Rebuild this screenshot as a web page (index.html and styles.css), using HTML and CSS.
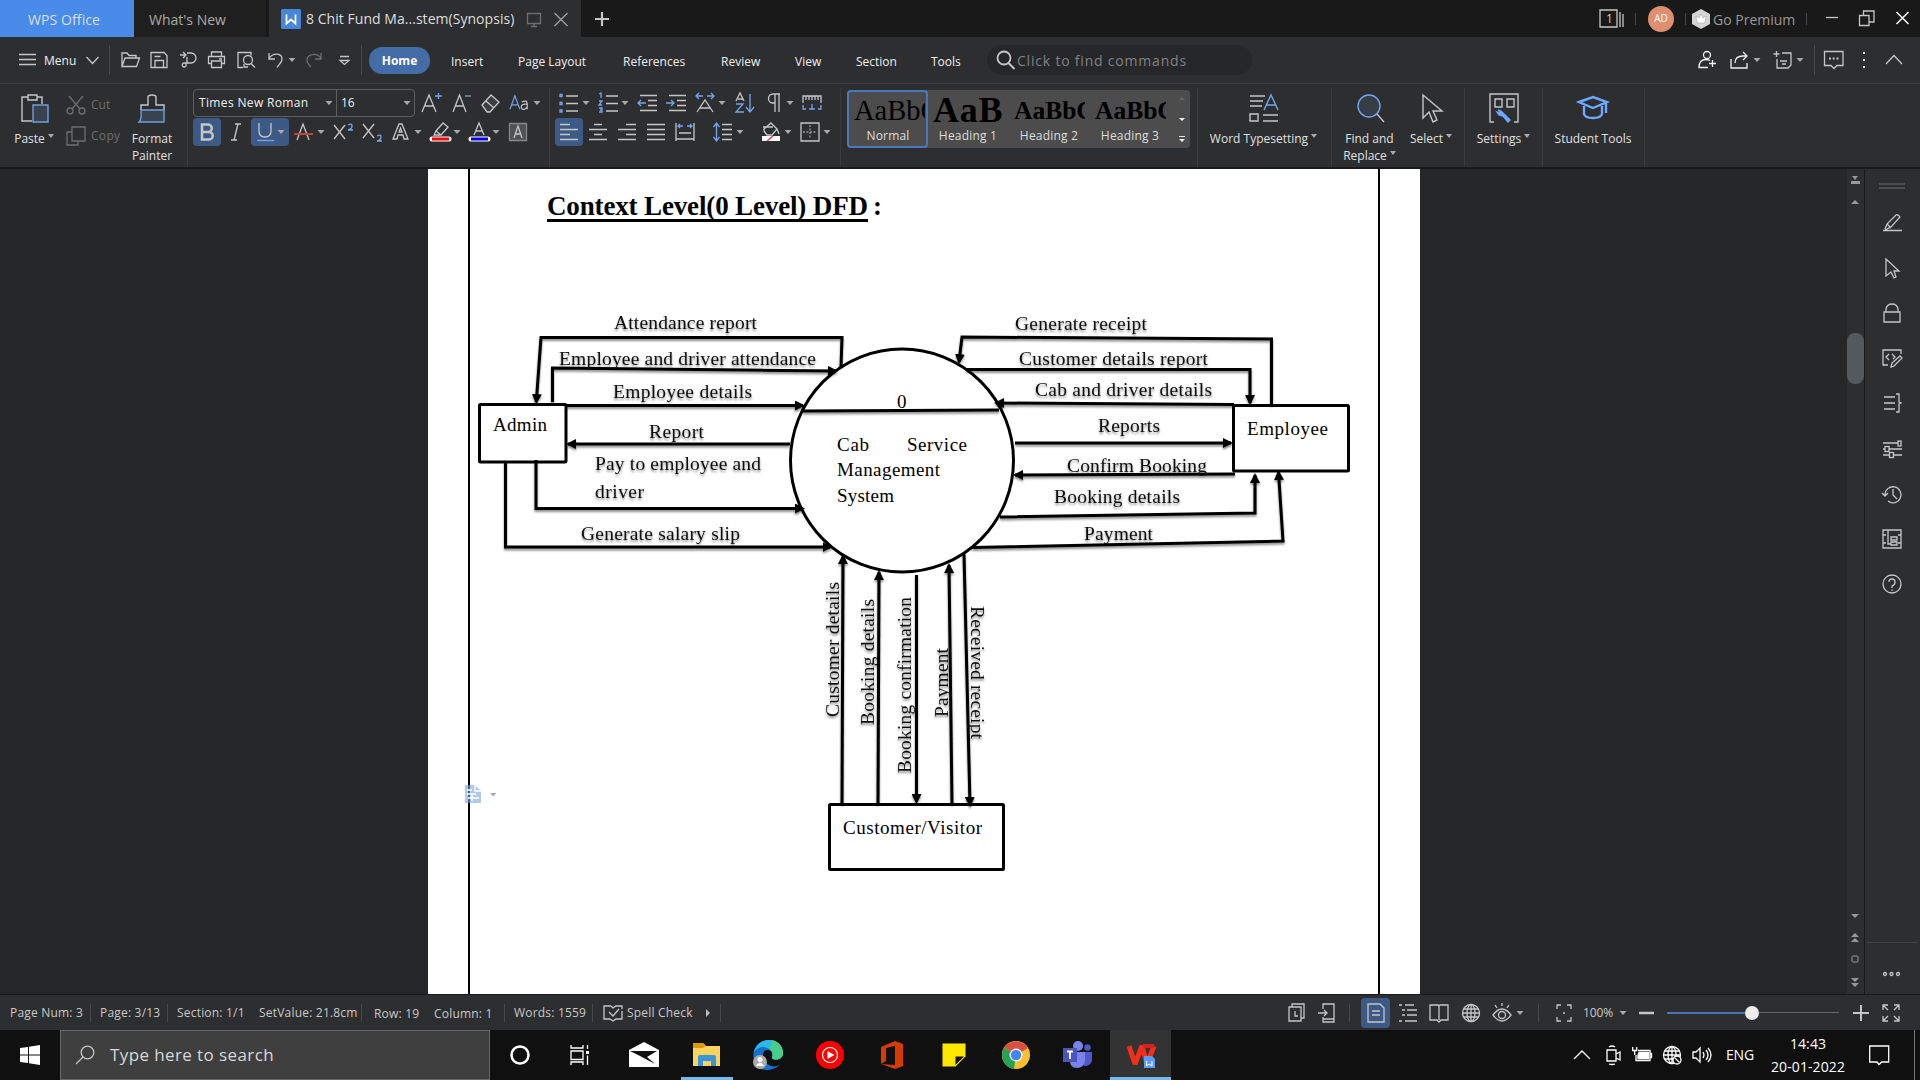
FILE: index.html
```html
<!DOCTYPE html>
<html lang="en">
<head>
<meta charset="utf-8">
<title>WPS Office</title>
<link rel="stylesheet" href="styles.css">
</head>
<body>
<svg class="defs" width="0" height="0">
  <defs>
    <symbol id="car" viewBox="0 0 8 20"><path d="M.5 8h7L4 12z" fill="#aaa" stroke="none"/></symbol>
    <symbol id="globe" viewBox="0 0 20 20"><circle cx="10" cy="10" r="8.500"/><ellipse cx="10" cy="10" rx="4" ry="8.500"/><path d="M10 1.500v17M2.500 6h15M1.500 10h17M2.500 14h15"/></symbol>
    <marker id="head" viewBox="0 0 10 10" refX="8" refY="5" markerWidth="10" markerHeight="10" markerUnits="userSpaceOnUse" orient="auto"><path d="M0 0l10 5-10 5z" fill="#000" stroke="none"/></marker>
    <filter id="shade" filterUnits="userSpaceOnUse" x="428" y="169" width="992" height="826"><feDropShadow dx="0" dy="2" stdDeviation="1.3" flood-color="#000" flood-opacity=".45"/></filter>
  </defs>
</svg>

<header class="titlebar">
  <div class="tab tab-home">WPS Office</div>
  <div class="tab tab-new">What's New</div>
  <div class="tab tab-doc">
    <svg class="doclogo" viewBox="0 0 20 20"><rect width="20" height="20" rx="1.500" fill="#4a86d8" stroke="none"/><path d="M5.500 5.500v9l4.500-4 4.500 4v-9" stroke="#fff" stroke-width="1.700"/></svg>
    <span class="docname">8 Chit Fund Ma...stem(Synopsis)</span>
    <svg class="i dim" viewBox="0 0 20 20"><path d="M3.500 4.500h13v10h-13zM10 14.500v3M7 17.500h6"/></svg>
    <svg class="i soft" viewBox="0 0 20 20"><path d="M3.500 4l13 13M16.500 4l-13 13"/></svg>
  </div>
  <svg class="i plus" viewBox="0 0 20 20"><path d="M10 3v14M3 10h14" stroke-width="2.200"/></svg>
  <svg class="i wide" viewBox="0 0 28 20"><path d="M2 1h17v17H2zM22 3v15M25 5v13" /><text x="8" y="14" class="tiny">1</text></svg>
  <i class="v"></i>
  <span class="avatar">AD</span>
  <i class="v"></i>
  <svg class="i" viewBox="0 0 20 20"><path d="M10 0l9 5v10l-9 5-9-5V5z" fill="#d5d5d5" stroke="none"/><path d="M5 7l3 2 2-4 2 4 3-2-1 7H6z" fill="#fff" stroke="#999" stroke-width=".5"/></svg>
  <span class="premium">Go Premium</span>
  <i class="v"></i>
  <svg class="i" viewBox="0 0 20 20"><path d="M3 8.500h12"/></svg>
  <svg class="i" viewBox="0 0 20 20"><path d="M2.500 6.500h9.500v10H2.500zM6.500 6V2h10.500v11h-4.500"/></svg>
  <svg class="i white" viewBox="0 0 20 20"><path d="M4.500 3l12 12M16.500 3l-12 12" stroke-width="1.600"/></svg>
</header>

<nav class="menubar">
  <svg class="i" viewBox="0 0 20 20"><path d="M0 4.500h17M0 9.500h17M0 14.500h17"/></svg>
  <span class="mn">Menu</span>
  <svg class="i" viewBox="0 0 20 20"><path d="M1.500 7l6 6.500 6-6.500"/></svg>
  <i class="v"></i>
  <svg class="i" viewBox="0 0 20 20"><path d="M2 16.500V3h5l2 2.500h7V8M2 16.500l3-8.500h14.500l-3 8.500z"/></svg>
  <svg class="i" viewBox="0 0 20 20"><path d="M2 2.500h13l3 3v12H2zM6 17v-6.500h8.500V17M5.500 6.500h6"/></svg>
  <svg class="i" viewBox="0 0 20 20"><path d="M1 5h5M4 2l3 3-3 3M8 3h4a5 5 0 0 1 0 10H7v3a2 2 0 1 1-2-3h3V7"/></svg>
  <svg class="i" viewBox="0 0 20 20"><path d="M3.500 6.500V2h10v4.500M3 13.500H.5v-7h16v7H14M3.500 11h10v6.500h-10zM11 9h3"/></svg>
  <svg class="i" viewBox="0 0 20 20"><path d="M7 17.500H2v-15h13v3"/><circle cx="12" cy="10" r="4.500"/><path d="M15 13.500l4 4M8 14v3h4"/></svg>
  <svg class="i" viewBox="0 0 20 20"><path d="M2 3v6h6M2 8.500C6 2 15 3 15 9c0 4-3 5-5 8.500"/></svg>
  <svg class="c"><use href="#car"/></svg>
  <svg class="i dim" viewBox="0 0 20 20"><path d="M16 3v6h-6M16 8.500C12 2 2 4 2 10c0 3 2 5 4 7"/></svg>
  <svg class="i" viewBox="0 0 20 20"><path d="M2 6.500h9M2 10.500h9l-4.500 4z"/></svg>
  <i class="v"></i>
  <span class="home">Home</span>
  <span>Insert</span><span>Page Layout</span><span>References</span><span>Review</span><span>View</span><span>Section</span><span>Tools</span>
  <div class="find"><svg class="i" viewBox="0 0 20 20"><circle cx="8" cy="8" r="6.500" stroke-width="1.800"/><path d="M12.500 13l6 6" stroke-width="2"/></svg><span>Click to find commands</span></div>
  <svg class="i white" viewBox="0 0 20 20"><circle cx="10" cy="5" r="3.500"/><path d="M11 17.500H2c0-6 3-8 7-8 2 0 3 .5 4 1M15.500 10v7M12 13.500h7"/></svg>
  <svg class="i white" viewBox="0 0 20 20"><path d="M2 9v9h16v-5M6 13c0-5 3-7 8-7h3M14 2l4 4-4 4"/></svg>
  <svg class="c"><use href="#car"/></svg>
  <svg class="i" viewBox="0 0 20 20"><path d="M3.500 1v6M.5 4h6M9 3h9v12l-3 3H4V9M7 11h7M9 14h4"/></svg>
  <svg class="c"><use href="#car"/></svg>
  <i class="v"></i>
  <svg class="i" viewBox="0 0 20 20"><path d="M1.500 1.500H20v14h-6l-3 3-3-3H1.500z"/><path d="M6 8.500h2M9.700 8.500h2M13.500 8.500h2" stroke-width="2"/></svg>
  <svg class="c" viewBox="0 0 8 20"><path d="M2 3h2M2 10h2M2 17h2" stroke="#ddd" stroke-width="2"/></svg>
  <svg class="i" viewBox="0 0 20 20"><path d="M2 14l8-8.500 8 8.500"/></svg>
</nav>

<section class="ribbon">
  <div class="group clip">
    <div class="big"><svg class="b" viewBox="0 0 30 30"><path d="M9 4H3v24h10M18 4h5v7M9 2h9v5H9z"/><path d="M14 12h15v17H14z" stroke="#6f9fe0" fill="#39424f"/></svg><span>Paste<b></b></span></div>
    <div class="stack">
      <div class="dim"><svg class="i" viewBox="0 0 20 20"><path d="M3 1l11 13M17 1L6 14"/><circle cx="4" cy="16" r="3"/><circle cx="16" cy="16" r="3"/></svg>Cut</div>
      <div class="dim"><svg class="i" viewBox="0 0 20 20"><path d="M6 1h13v14H6zM6 6H1v13h11v-4"/></svg>Copy</div>
    </div>
    <div class="big fp"><svg class="b" viewBox="0 0 30 30"><path d="M4 17v-5h7V4q0-2 4-2t4 2v8h8v5"/><path d="M4 17h23v12H2q3-3 2-12z" stroke="#6f9fe0" fill="#39424f"/></svg><span>Format<br>Painter</span></div>
  </div>

  <div class="group font">
    <div class="row f1">
      <div class="combo"><span class="fam">Times New Roman</span><svg class="c"><use href="#car"/></svg><span class="size">16</span><svg class="c"><use href="#car"/></svg></div>
      <svg class="i" viewBox="0 0 20 20"><path d="M1 19L8 2l7 17M4 13h8"/><path d="M14 3h7M17.500 0v6" class="bl"/></svg>
      <svg class="i" viewBox="0 0 20 20"><path d="M1 19L7.500 2 14 19M4 13h7"/><path d="M13 3h6" class="bl"/></svg>
      <svg class="i" viewBox="0 0 20 20"><path d="M2 12L11 2l8 7-9 10H7zM6 8l8 7" fill="#3c3d3f"/></svg>
      <svg class="i" viewBox="0 0 22 20"><path d="M1 17L6.500 2 12 17M3 12h7" class="bl"/><path d="M14 9q6-3 6 2v6M20 11c-9 0-7 6-4 6q3 0 4-3"/></svg>
      <svg class="c"><use href="#car"/></svg>
    </div>
    <div class="row f2">
      <span class="on"><svg class="i" viewBox="0 0 20 20"><path d="M5 2.500h6a3.500 3.500 0 0 1 0 7.500H5zM5 10h7a3.700 3.700 0 0 1 0 7.500H5z" stroke-width="2.500"/></svg></span>
      <svg class="i" viewBox="0 0 20 20"><path d="M9 2h6M12 2L8 18M5 18h6"/></svg>
      <span class="on duo"><svg class="i" viewBox="0 0 20 20"><path d="M4 1v8q0 6 6 6t6-6V1"/><path d="M2 18.500h17" class="bl"/></svg><svg class="c"><use href="#car"/></svg></span>
      <svg class="i" viewBox="0 0 20 20"><path d="M4 18l6-16 6 16M7 12h6"/><path d="M1 12h19" stroke="#c0463c" stroke-width="2"/></svg>
      <svg class="c"><use href="#car"/></svg>
      <svg class="i" viewBox="0 0 20 20"><path d="M1 3l11 14M12 3L1 17"/><path d="M15 3q4-2 4 1t-4 4h5" class="bl"/></svg>
      <svg class="i" viewBox="0 0 20 20"><path d="M1 2l11 14M12 2L1 16"/><path d="M15 14q4-2 4 1t-4 4h5" class="bl"/></svg>
      <svg class="i" viewBox="0 0 20 20"><path d="M2 17L8 2h3l6 15h-4l-1-4H7l-1 4zM8 10h3L9.500 6z"/></svg>
      <svg class="c"><use href="#car"/></svg>
      <svg class="i" viewBox="0 0 20 20"><path d="M6 9l7-8 5 4-7 8zM6 9l-2 4h7"/><path d="M2 17h17" stroke="#fff" stroke-width="5" stroke-linecap="round"/><path d="M2 17h17" stroke="#f00" stroke-width="3"/></svg>
      <svg class="c"><use href="#car"/></svg>
      <svg class="i" viewBox="0 0 20 20"><path d="M5 13l5-12 5 12M7 9h6"/><path d="M2 17h17" stroke="#fff" stroke-width="5" stroke-linecap="round"/><path d="M2 17h17" stroke="#00f" stroke-width="3"/></svg>
      <svg class="c"><use href="#car"/></svg>
      <svg class="i" viewBox="0 0 20 20"><path d="M1.500 1.500h17v17h-17z" stroke="#888" fill="#505153"/><path d="M6 16l4-12 4 12M7 12h6"/></svg>
    </div>
  </div>

  <div class="group para">
    <div class="row p1">
      <svg class="i" viewBox="0 0 20 20"><path d="M8 3h12M8 10.500h12M8 18h12"/><path d="M2 1.500h2v2H2zM2 9.500h2v2H2zM2 17h2v2H2z" class="bl"/></svg>
      <svg class="c"><use href="#car"/></svg>
      <svg class="i" viewBox="0 0 20 20"><path d="M8 3h12M8 10.500h12M8 18h12"/><path d="M1 1l2-1v5M1 8h3L1 12h3M1 15h3v4H1M2 17h2" class="bl"/></svg>
      <svg class="c"><use href="#car"/></svg>
      <svg class="i" viewBox="0 0 20 20"><path d="M3 2.500h17M11 7.500h9M11 12.500h9M3 17.500h17"/><path d="M9 10H1M4 7l-3 3 3 3" class="bl"/></svg>
      <svg class="i" viewBox="0 0 20 20"><path d="M3 2.500h17M11 7.500h9M11 12.500h9M3 17.500h17"/><path d="M0 10h8M5 7l3 3-3 3" class="bl"/></svg>
      <svg class="i" viewBox="0 0 20 20"><path d="M2 19l8-12 8 12M5 15h10"/><path d="M8 3H1M4 0L1 3l3 3M12 3h7M16 0l3 3-3 3" class="bl"/></svg>
      <svg class="c"><use href="#car"/></svg>
      <svg class="i" viewBox="0 0 20 20"><path d="M1 8l4-8 4 8M3 6h5"/><path d="M1 11h7l-7 8h8M15 1v18M11 14l4 5 4-5" class="bl"/></svg>
      <svg class="i" viewBox="0 0 20 20"><path d="M15 1H8a4 4 0 0 0 0 9h2M10 1v18M14 1v18"/></svg>
      <svg class="c"><use href="#car"/></svg>
      <svg class="i" viewBox="0 0 20 20"><path d="M1 10V3h18v7M4 3v4M7 3v4M10 3v4M13 3v4M16 3v4"/><path d="M1 12v4h3M19 12v4h-3M10 11v5M7 16h6" class="bl"/></svg>
    </div>
    <div class="row p2">
      <span class="on"><svg class="i" viewBox="0 0 20 20"><path d="M1 2.500h10M1 7.500h18M1 12.500h10M1 17.500h18"/></svg></span>
      <svg class="i" viewBox="0 0 20 20"><path d="M6 2.500h8M1 7.500h18M6 12.500h8M1 17.500h18"/></svg>
      <svg class="i" viewBox="0 0 20 20"><path d="M9 2.500h10M1 7.500h18M9 12.500h10M1 17.500h18"/></svg>
      <svg class="i" viewBox="0 0 20 20"><path d="M1 2.500h18M1 7.500h18M1 12.500h18M1 17.500h18"/></svg>
      <svg class="i" viewBox="0 0 20 20"><path d="M1 1v18M19 1v18M4 11h12M1 17h18"/><path d="M3 4h5M5 2L3 4l2 2M12 4h5M15 2l2 2-2 2" class="bl"/></svg>
      <svg class="i" viewBox="0 0 20 20"><path d="M9 2.500h10M9 7.500h10M9 12.500h10M9 17.500h10"/><path d="M3.500 1v18M.5 5l3-4 3 4M.5 15l3 4 3-4" class="bl"/></svg>
      <svg class="c"><use href="#car"/></svg>
      <svg class="i" viewBox="0 0 20 20"><path d="M3 7l7-6 6 6-5 6H6L3 9zM2 5h10M16 7l2 5"/><path d="M1 14h18v5H1z" fill="#fff" stroke="none"/><path d="M6 19l6-5" stroke="#d33"/></svg>
      <svg class="c"><use href="#car"/></svg>
      <svg class="i" viewBox="0 0 20 20"><path d="M1 1h18v18H1z"/><path d="M10 3v14M3 10h14" stroke-dasharray="2 1.500" stroke="#999"/></svg>
      <svg class="c"><use href="#car"/></svg>
    </div>
  </div>

  <div class="group styles">
    <div class="gallery">
      <div class="style sel"><em>AaBbC</em><span>Normal</span></div>
      <div class="style h1"><em>AaBb</em><span>Heading 1</span></div>
      <div class="style h2"><em>AaBbC</em><span>Heading 2</span></div>
      <div class="style h2"><em>AaBbC</em><span>Heading 3</span></div>
      <div class="more"><svg viewBox="0 0 12 58"><path d="M4 10l3-3 3 3z" fill="#666"/><path d="M4 28h6l-3 3zM4 49h6l-3 3z" fill="#eee"/><path d="M4 46.500h6" stroke="#eee"/></svg></div>
    </div>
  </div>

  <div class="group g-type"><div class="big"><svg class="b" viewBox="0 0 30 30"><path d="M1 3h15M1 8h13M1 13h12M1 21h8v7H1zM14 22h15M14 28h15"/><path d="M15 17l7-15 7 15M17 12h9" class="bl"/></svg><span>Word Typesetting<b></b></span></div></div>
  <div class="group g-find">
    <div class="big"><svg class="b" viewBox="0 0 30 30"><circle cx="14" cy="13" r="11" class="bl" fill="#363d47"/><path d="M22 21l7 8"/></svg><span>Find and<br>Replace<b></b></span></div>
    <div class="big"><svg class="b" viewBox="0 0 30 30"><path d="M7 2v23l6-6 4 10 4-2-4-9h9z"/></svg><span>Select<b></b></span></div>
  </div>
  <div class="group g-set"><div class="big"><svg class="b" viewBox="0 0 30 30"><path d="M5 29H1V1h28v28h-4M6 6h7v8H6zM18 6h7v8h-7z"/><path d="M9 17l3 1 3 3 6 6-2 2-5-6-4-1-2-3 3 1 1-1z" fill="#6fa8ff" stroke="#6fa8ff"/></svg><span>Settings<b></b></span></div></div>
  <div class="group g-stu"><div class="big"><svg class="b" viewBox="0 0 30 30"><path d="M1 9l14-5 14 5-14 6zM6 13v8q1 4 9 4t9-4v-8M28 10v10" stroke="#6fa8ff" stroke-width="2.400"/></svg><span>Student Tools</span></div></div>
</section>

<main class="work">
  <div class="canvas">
    <svg class="page" viewBox="428 169 992 826">
      <path d="M469 169v826M1379 169v826" stroke="#000" stroke-width="2"/>
      <g class="heading"><text x="547" y="215" textLength="321">Context Level(0 Level) DFD</text><text x="873" y="215">:</text></g>
      <path d="M547 220.500h321" stroke="#000" stroke-width="3"/>
      <g class="flow" filter="url(#shade)">
        <g class="wires">
          <path d="M841 367l1-29.500H541L536.300 402"/><path d="M552.500 402v-34L836 371"/><path d="M566 405.500h237"/><path d="M790 444H568"/>
          <path d="M536 460v48.500h267"/><path d="M505.500 461v86h325"/>
          <path d="M1271.500 405V339L962 337l-3 25"/><path d="M966 369.500h284V403"/><path d="M1234 404.500L996 403"/><path d="M1015 443h216"/>
          <path d="M1235 474l-220 1"/><path d="M1000 517l255-4v-38"/><path d="M972 547.500l311-6.500-4.500-69"/>
          <path d="M842 804l1-248"/><path d="M878 804l1-232"/><path d="M916.500 575v227"/><path d="M952 804l-3-239"/><path d="M964 554l6 251"/>
        </g>
        <path d="M803 411l196-1" stroke="#000" stroke-width="3"/>
        <g class="labels">
          <text x="614" y="329" textLength="143">Attendance report</text>
          <text x="559" y="364.500" textLength="257">Employee and driver attendance</text>
          <text x="613" y="398" textLength="139">Employee details</text>
          <text x="649" y="437.500" textLength="55">Report</text>
          <text x="595" y="469.500" textLength="166">Pay to employee and</text>
          <text x="595" y="498" textLength="49">driver</text>
          <text x="581" y="540" textLength="159">Generate salary slip</text>
          <text x="1015" y="330" textLength="132">Generate receipt</text>
          <text x="1019" y="365" textLength="189">Customer details report</text>
          <text x="1035" y="396" textLength="177">Cab and driver details</text>
          <text x="1098" y="431.500" textLength="62">Reports</text>
          <text x="1067" y="472" textLength="140">Confirm Booking</text>
          <text x="1054" y="503" textLength="126">Booking details</text>
          <text x="1084" y="540" textLength="69">Payment</text>
          <text transform="translate(838.500 717) rotate(-90)" textLength="135">Customer details</text>
          <text transform="translate(873.500 725) rotate(-90)" textLength="126">Booking details</text>
          <text transform="translate(911 773) rotate(-90)" textLength="176">Booking confirmation</text>
          <text transform="translate(948 717) rotate(-90)" textLength="69">Payment</text>
          <text transform="translate(971 606) rotate(90)" textLength="133">Received receipt</text>
        </g>
      </g>
      <g fill="none" stroke="#000" stroke-width="3">
        <circle cx="902" cy="460.500" r="111.500"/>
        <rect x="479.500" y="404.500" width="86.500" height="57.500" rx="1"/>
        <rect x="1233.500" y="405.500" width="115" height="65.500" rx="1"/>
        <rect x="829.500" y="804.500" width="174" height="65" rx="1"/>
      </g>
      <g class="names">
        <text x="493" y="431" textLength="54">Admin</text>
        <text x="1247" y="435" textLength="81">Employee</text>
        <text x="843" y="834" textLength="139">Customer/Visitor</text>
        <text x="897" y="407.500">0</text>
        <text x="837" y="450.500" textLength="32">Cab</text><text x="907" y="450.500" textLength="60">Service</text>
        <text x="837" y="475.500" textLength="103">Management</text>
        <text x="837" y="501.500" textLength="57">System</text>
      </g>
      <path d="M465 785h10l6 6v12h-16z" fill="#7fa6dc" opacity=".6"/><path d="M475 785v6h6M467 790h5M467 794h9M468 798h11M472 795v6" stroke="#fff" fill="none" stroke-width="1.300"/>
      <path d="M490 793h6.500l-3.200 3.500z" fill="#aaa"/>
    </svg>
  </div>
  <div class="scroll">
    <svg class="ends" viewBox="0 0 17 40"><path d="M5 7h6l-3 4zM4 12h9v3H4z" fill="#999"/><path d="M4 35l4-4 4 4z" fill="#999"/></svg>
    <div class="thumb"></div>
    <svg class="tail" viewBox="0 0 17 84"><path d="M4 3h8l-4 4zM4 26l4-4 4 4zM4 31l4-4 4 4zM4 67h8l-4 4zM4 72h8l-4 4z" fill="#999"/><rect x="5" y="45" width="6" height="6" rx="1" fill="none" stroke="#999"/></svg>
  </div>
  <aside class="side">
    <svg class="grip" viewBox="0 0 26 8"><path d="M0 2h26M0 6h26"/></svg>
    <svg class="i" viewBox="0 0 20 20"><path d="M1 17.500h19M3 16l2-5 9-9q2-1 4 2l-9 10-6 3M5 11l4 4"/></svg>
    <svg class="i" viewBox="0 0 20 20"><path d="M4 1v17l5-4 3 6 2-1-2-6h5z"/></svg>
    <svg class="i" viewBox="0 0 20 20"><path d="M2 9h16v10H2zM4 9V6q1-5 6-5t6 5v3"/></svg>
    <svg class="i" viewBox="0 0 20 20"><path d="M6 17H1V2h18v4M7 6L4 9l3 3M10 6l3 3-2 2M9 19l1-4 8-7 2 2-8 8z"/></svg>
    <svg class="i" viewBox="0 0 20 20"><path d="M2 4h11M2 10h11M2 16h11M14 1h3v8l2 1-2 1v8h-3"/></svg>
    <svg class="i" viewBox="0 0 20 20"><path d="M1 4h15M1 10h2M7 10h13M1 16h6M11 16h9"/><rect x="16" y="2" width="3" height="5"/><rect x="3" y="7.500" width="4" height="5"/><rect x="7.500" y="13.500" width="4" height="5"/></svg>
    <svg class="i" viewBox="0 0 20 20"><path d="M3 11a8 8 0 1 1 3 6M0 9l3 3 3-3M11 5v6l4 4"/></svg>
    <svg class="i" viewBox="0 0 20 20"><path d="M1 1h18v18H1zM6 1v14h3M9 8h6v3H9zM9 13h6v3H9zM1 6h3M1 14h3M16 6h3M16 14h3"/></svg>
    <svg class="i" viewBox="0 0 20 20"><circle cx="10" cy="10" r="9"/><path d="M7 8q0-3 3-3t3 3-3 4v2M10 15.500v1.500"/></svg>
    <div class="dots"><svg class="i" viewBox="0 0 20 20"><circle cx="3" cy="10" r="1.500"/><circle cx="9.500" cy="10" r="1.500"/><circle cx="16" cy="10" r="1.500"/></svg></div>
  </aside>
</main>

<footer class="status">
  <span>Page Num: 3</span><i class="v"></i><span>Page: 3/13</span><i class="v"></i><span>Section: 1/1</span><span>SetValue: 21.8cm</span><i class="v"></i><span class="lo">Row: 19</span><span class="lo">Column: 1</span><i class="v"></i><span>Words: 1559</span><i class="v"></i>
  <svg class="i" viewBox="0 0 20 20"><path d="M8 3H1v13h6l3 2 3-2h6V8M8 3l2 2 3-2h6v3M6 9l4 4 6-7"/></svg><span>Spell Check</span>
  <svg class="c" viewBox="0 0 8 20"><path d="M2 6l4 4-4 4z" fill="#bbb"/></svg><i class="v"></i>
  <svg class="i" viewBox="0 0 20 20"><path d="M2 4h12v14H2zM5 4V1h12v14h-3M8 8v5h3"/></svg>
  <svg class="i" viewBox="0 0 20 20"><path d="M5 6V1h11v18H5v-5M0 10h9M6 7l3 3-3 3M5 16h11"/></svg>
  <i class="v"></i>
  <span class="view"><svg class="i" viewBox="0 0 20 20"><path d="M2 1h12l4 4v14H2zM6 8h8M6 12h8"/></svg></span>
  <svg class="i" viewBox="0 0 20 20"><path d="M1 2h3M7 2h9M4 7h3M9 7h10M4 12h3M9 12h10M1 18h3M7 18h12"/></svg>
  <svg class="i" viewBox="0 0 20 20"><path d="M1 2h8l1 1 1-1h8v15h-7l-2 2-2-2H1zM10 3v14"/></svg>
  <svg class="i"><use href="#globe"/></svg>
  <svg class="i" viewBox="0 0 20 20"><path d="M1 12q9-12 18 0-9 12-18 0zM10 0v3M3 2l2 3M17 2l-2 3"/><circle cx="10" cy="12" r="3.500"/></svg>
  <svg class="c"><use href="#car"/></svg><i class="v"></i>
  <svg class="i" viewBox="0 0 20 20"><path d="M6 2H2v4M12 2h4v4M6 18H2v-4M12 18h4v-4M8 10h2"/></svg>
  <span class="pct">100%</span><svg class="c"><use href="#car"/></svg>
  <svg class="i" viewBox="0 0 20 20"><path d="M2 10h15" stroke-width="2.500"/></svg>
  <div class="slider"><div class="fill"></div><div class="knob"></div></div>
  <svg class="i" viewBox="0 0 20 20"><path d="M2 10h16M10 2v16" stroke-width="2"/></svg>
  <svg class="i" viewBox="0 0 20 20"><path d="M2 7V2h5M2 2l5 5M13 2h5v5M18 2l-5 5M2 13v5h5M2 18l5-5M13 18h5v-5M18 18l-5-5"/></svg>
</footer>

<div class="taskbar">
  <svg class="start" viewBox="0 0 20 20"><path d="M0 3l8-1v7.500H0zM9 1.800L20 0v9.500H9zM0 10.500h8V18l-8-1zM9 10.500h11V20L9 18.200z" fill="#fff"/></svg>
  <div class="search"><svg class="i" viewBox="0 0 20 20"><circle cx="12.500" cy="7.500" r="6.300"/><path d="M8 12l-7 7"/></svg><span>Type here to search</span></div>
  <svg class="app" viewBox="0 0 30 30"><circle cx="15" cy="15" r="8.500" fill="none" stroke="#fff" stroke-width="2.500"/></svg>
  <svg class="app" viewBox="0 0 30 30"><path d="M6 5v3h12V5M6 11h12v8.500H6zM6 25v-3h12v3M22.500 5v4M22.500 15.500v9.500" fill="none" stroke="#fff" stroke-width="1.300"/><path d="M21 11h3v3h-3z" fill="#fff"/></svg>
  <svg class="app" viewBox="0 0 30 30"><path d="M0 10l15-8 15 8v17H0z" fill="#fff"/><path d="M1 11h27l-10 6 8 7-15-8z" fill="#101010"/></svg>
  <span class="cell open"><svg class="app" viewBox="0 0 30 30"><path d="M1 3h10l3 3h14v20H1z" fill="#ffd35c"/><path d="M1 3h10l3 3-3 2H1z" fill="#dc9a08"/><path d="M6 26V17q0-2 2-2h14q2 0 2 2v9h-5v-5h-8v5z" fill="#3a94dc"/></svg></span>
  <svg class="app" viewBox="0 0 30 30"><path d="M3 26C-4 10 4 0 16 0c9 0 14 7 14 13 0 7-9 8-11 5 2-5-1-8-5-8-6 0-6 12 4 16 4 1 7 0 9-2-4 6-16 9-24 2z" fill="#1571c8"/><path d="M1 12C4 3 10 0 16 0c9 0 14 7 14 13 0 7-9 8-11 5 2-6-3-11-9-11-4 0-7 2-9 5z" fill="#2bb8e6"/><path d="M18 0c8 1 12 7 12 13 0 7-9 8-11 5 2-5 0-9-4-11 4-1 5-4 3-7z" fill="#47cf88"/><circle cx="7" cy="22" r="7" fill="#aaa"/><circle cx="7" cy="19.500" r="2.500" fill="#fff"/><path d="M3 26q4-7 8 0z" fill="#fff"/></svg>
  <svg class="app" viewBox="0 0 30 30"><circle cx="15" cy="15" r="14" fill="#f00"/><circle cx="15" cy="15" r="7.500" fill="none" stroke="#fff" stroke-width="1.200"/><path d="M12.500 11l7 4-7 4z" fill="#fff"/></svg>
  <svg class="app" viewBox="0 0 30 30"><path d="M4 7l14-6 8 3v22l-8 3-14-5 14 1V6L9 8v13l-5 3z" fill="#d83b01"/></svg>
  <svg class="app" viewBox="0 0 30 30"><path d="M3.500 3.500h23V15H15v11.500H3.500z" fill="#ffe600"/><path d="M16.500 16.500h9l-9 9z" fill="#111"/><path d="M26.500 15v1.500l-10 10H15V15z" fill="#ffe600"/><path d="M16.500 16.500h8.500L16.500 25z" fill="#111"/></svg>
  <svg class="app" viewBox="0 0 30 30"><circle cx="15" cy="15" r="14" fill="#fbc02d"/><path d="M15 15L3 8a14 14 0 0 1 24 0z" fill="#d94f41"/><path d="M15 15l-2 14A14 14 0 0 1 3 8z" fill="#23a455"/><circle cx="15" cy="15" r="6.500" fill="#fff"/><circle cx="15" cy="15" r="5.200" fill="#4285f4"/></svg>
  <svg class="app" viewBox="0 0 30 30"><circle cx="16" cy="6" r="5" fill="#7b83eb"/><circle cx="25.500" cy="7.500" r="3.200" fill="#5059c9"/><path d="M18 12h12v8q-1 6-8 6z" fill="#5059c9"/><path d="M8 12h15v9q-1 7-8 7t-7-7z" fill="#7b83eb"/><path d="M1 8h14v14H1z" fill="#4b53bc"/><path d="M5 11.500h6M8 11.500v7.500" stroke="#fff" stroke-width="1.800"/></svg>
  <span class="cell open cur"><svg class="app" viewBox="0 0 30 30"><path d="M3 6l6 18 7-18 5 18 7-18" fill="none" stroke="#f0301c" stroke-width="5" stroke-linejoin="bevel"/><path d="M17 6h11" stroke="#d8201c" stroke-width="4"/><path d="M18 16h8l3 3v9H18z" fill="#5b9af5"/><path d="M20.500 21v5l2.500-2 3 2v-5" stroke="#fff" fill="none"/></svg></span>
  <svg class="t" viewBox="0 0 20 20"><path d="M2 14l8-8 8 8"/></svg>
  <svg class="t" viewBox="0 0 20 20"><path d="M5 5h9v11H5zM14 9l4-2v8l-4-2M7 2q3-2 6 0M7 19q3 1 6 0"/></svg>
  <svg class="t" viewBox="0 0 20 20"><path d="M6 5.500h12v10H4V10M18 8.500h1.500v4H18"/><path d="M7 7.500h9.500v6H6V10z" fill="#fff"/><path d="M.7 2v3.500h4V2M2.700 5v5"/></svg>
  <svg class="t" viewBox="0 0 20 20"><use href="#globe"/><circle cx="15" cy="15" r="4" fill="#101010"/><path d="M12.500 12.500l5 5"/></svg>
  <svg class="t" viewBox="0 0 20 20"><path d="M1 7h3l4-4v14l-4-4H1zM11 7q2 3 0 6M14 5q4 5 0 10M16 3q6 7 0 14"/></svg>
  <span class="eng">ENG</span>
  <div class="clock"><span>14:43</span><span>20-01-2022</span></div>
  <svg class="t" viewBox="0 0 20 20"><path d="M.7 1h19v16h-7L10 19.500 8 17H.7z"/></svg>
  <i class="edge"></i>
</div>
</body>
</html>
```
FILE: styles.css
```css
* { box-sizing: border-box; }
body {
  margin: 0; width: 1920px; height: 1080px; overflow: hidden;
  display: grid; grid-template-rows: 37px 47px 85px 826px 35px 50px;
  background: #2d2e30; color: #dedede;
  font: 12px/18px "Open Sans", "Noto Sans", sans-serif;
}
span, div { white-space: nowrap; }
.defs { position: absolute; }
svg { display: block; overflow: visible; }
.i { width: 20px; height: 20px; fill: none; stroke: currentColor; stroke-width: 1.3; color: #c6c6c6; flex: none; }
.c { width: 8px; height: 20px; flex: none; }
.bl { stroke: #74a5ee; }
.dim, .dim .i { color: #6d6e70; }
.soft { color: #a0a0a0; }
.white { color: #f0f0f0; }
.v { width: 1px; height: 30px; background: #47484a; }

/* Title bar */
.titlebar {
  display: grid; align-items: center; background: #191919;
  grid-template-columns: 134px 135px 323px 1006px 37px 13px 37px 6px 22px 93px 17px 34px 35px 28px;
}
.tab { height: 37px; line-height: 39px; font-size: 14px; }
.tab-home { background: #488be9; padding-left: 28px; letter-spacing: .1px; }
.tab-new { width: 132px; background: #1f1f1f; color: #aaa; padding-left: 15px; }
.tab-doc { width: 312px; background: #2d2e30; display: flex; align-items: center; padding-left: 12px; }
.doclogo { width: 20px; height: 20px; fill: none; margin-right: 5px; }
.docname { width: 218px; letter-spacing: .04px; }
.tab-doc .i + .i { margin-left: 7px; }
.wide { width: 28px; }
.tiny { font-size: 12px; fill: #ccc; stroke: none; }
.titlebar .v { height: 12px; }
.avatar { width: 26px; height: 26px; border-radius: 50%; background: #e08e70; color: #fff; font-size: 10px; line-height: 25px; text-align: center; }
.premium { font-size: 14px; color: #999; padding-top: 2px; }

/* Menu bar */
.menubar {
  display: grid; align-items: center; padding-left: 19px; border-bottom: 1px solid #3c3d3f;
  grid-template-columns: 25px 41px 24px 11px 29px 30px 29px 28px 31px 21px 17px 33px 23px 8px 82px 67px 105px 98px 74px 61px 75px 56px 710px 32px 24px 20px 23px 18px 9px 38px 23px 20px;
}
.menubar > span { padding-top: 3px; color: #eee; }
.menubar .mn { padding-top: 1px; }
.menubar .home { width: 61px; height: 27px; padding: 0; line-height: 28px; border-radius: 13px; background: #446ca6; color: #fff; font-weight: 700; text-align: center; }
.find { width: 265px; height: 30px; border-radius: 15px; background: #262729; display: flex; align-items: center; padding-left: 9px; color: #828282; font-size: 14px; letter-spacing: .8px; gap: 1px; }
.find span { padding-top: 1px; }

/* Ribbon */
.ribbon { display: flex; border-bottom: 2px solid #191919; padding-top: 4px; }
.group { border-right: 1px solid #3a3b3d; height: 79px; }
.big { display: flex; flex-direction: column; align-items: center; text-align: center; padding-top: 5px; color: #e0e0e0; }
.b { width: 30px; height: 30px; fill: none; stroke: #c6c6c6; stroke-width: 1.4; }
.big span { margin-top: 7px; line-height: 17px; }
.big b { display: inline-block; border: 3px solid transparent; border-top: 4px solid #aaa; border-bottom: 0; margin-left: 3px; vertical-align: 5px; }
.clip { width: 188px; display: flex; padding-left: 12px; }
.clip .big { width: 44px; }
.stack { width: 72px; padding-left: 10px; display: flex; flex-direction: column; gap: 11px; padding-top: 7px; }
.stack div { display: flex; align-items: center; gap: 5px; }
.stack div + div { letter-spacing: .3px; }
.clip .fp { width: 48px; }
.font { width: 362px; padding-left: 5px; }
.para { width: 291px; padding-left: 5px; }
.row { display: grid; align-items: center; }
.f1 { height: 29px; grid-template-columns: 228px 31px 28px 29px 24px 10px; }
.f2 { height: 29px; grid-template-columns: 33px 25px 42px 24px 16px 29px 29px 23px 16px 23px 16px 23px 16px 20px; }
.p1 { height: 29px; padding-left: 3px; grid-template-columns: 24px 16px 23px 16px 29px 29px 23px 17px 30px 21px 16px 20px; }
.p2 { height: 29px; grid-template-columns: 33px 29px 29px 29px 38px 23px 25px 23px 16px 23px 10px; }
.combo { width: 222px; height: 28px; border: 1px solid #5d5e60; border-radius: 4px; display: flex; align-items: center; color: #f0f0f0; }
.fam { width: 131px; padding-left: 5px; letter-spacing: .35px; }
.size { width: 67px; height: 26px; line-height: 26px; margin-left: 3px; padding-left: 4px; border-left: 1px solid #5d5e60; }
.on { width: 28px; height: 28px; border-radius: 4px; background: #3c5a85; display: flex; align-items: center; justify-content: center; }
.duo { width: 38px; gap: 2px; }
.styles { width: 357px; padding: 2px 0 0 6px; }
.gallery { width: 343px; height: 58px; display: flex; background: #4c4c4c; border-radius: 4px; }
.style { width: 81px; height: 58px; overflow: hidden; text-align: center; padding: 4px 1px 0 5px; border: 2px solid transparent; }
.sel { border-color: #4b76b8; border-radius: 4px; }
.style em { display: block; width: 71px; height: 30px; overflow: hidden; text-align: left; color: #000; font: 28.500px/29px "Liberation Serif", serif; }
.style.h1 em { font-weight: 700; font-size: 36px; letter-spacing: .8px; }
.style.h2 em { font-weight: 700; font-size: 25.500px; padding-left: 0; }
.style.h1, .style.h2 { padding-left: 3px; }
.style span { display: block; line-height: 20px; padding-right: 3px; letter-spacing: .2px; }
.more { width: 19px; padding-left: 4px; }
.more svg { width: 12px; height: 58px; }
.g-type { width: 134px; padding-right: 2px; }
.g-find { width: 133px; display: flex; padding-left: 9px; }
.g-find .big { width: 57px; }
.g-find .big + .big { width: 66px; }
.g-set { width: 78px; }
.g-stu { width: 102px; padding-right: 1px; }

/* Document area */
.work { display: grid; grid-template-columns: 1847px 17px 56px; background: #262729; border-bottom: 1px solid #191919; overflow: hidden; }
.canvas { padding-left: 428px; }
.page { width: 992px; height: 826px; background: #fff; overflow: hidden; }
.page text { font-family: "Liberation Serif", serif; }
.heading { font-size: 27px; font-weight: 700; }
.wires path { fill: none; stroke: #000; stroke-width: 3; marker-end: url(#head); }
.labels { font-size: 19.500px; fill: #111; }
.names { font-size: 19px; }
.scroll { background: #2d2e30; display: flex; flex-direction: column; }
.ends { height: 40px; width: 17px; }
.thumb { height: 51px; margin-top: 124px; border-radius: 8px; background: #55585d; }
.tail { width: 17px; height: 84px; margin-top: auto; }
.side { background: #2d2e30; border-left: 1px solid #191919; display: flex; flex-direction: column; align-items: center; gap: 25.100px; padding: 13px 2px 0 0; }
.grip { width: 26px; height: 8px; stroke: #6a6b6d; }
.grip + .i { margin-top: -2px; }
.dots { width: 50px; margin-top: auto; border-top: 1px solid #404143; padding: 21px 0 0 15px; height: 53px; }

/* Status bar */
.status {
  display: grid; align-items: center; padding-left: 10px; color: #c9c9c9;
  grid-template-columns: 80px 10px 67px 10px 82px 102px 13px 60px 70px 10px 78px 11px 24px 77px 16px 567px 31px 31px 12px 37px 31px 32px 31px 24px 22px 17px 28px 36px 18px 30px 184px 30px 20px;
}
.status > span { letter-spacing: .2px; }
.status .pct { letter-spacing: -.1px; }
.status .lo { padding-top: 2px; }
.status .v { height: 18px; }
.view { width: 29px; height: 30px; border-radius: 4px; background: #3c5a85; display: flex; align-items: center; justify-content: center; }
.slider { width: 172px; height: 14px; display: flex; align-items: center; background: linear-gradient(#666, #666) center / 100% 1px no-repeat; }
.fill { width: 78px; height: 2px; background: #4a74b4; }
.knob { width: 14px; height: 14px; border-radius: 50%; background: #ececec; }

/* Taskbar */
.taskbar {
  display: grid; align-items: center; background: #101010; padding-left: 20px; color: #fff;
  grid-template-columns: 40px 445px 60px 64px 52px 72px 62px 62px 62px 62px 61px 48px 462px 30px 30px 30px 30px 34px 40px 103px 45px 6px;
}
.start { width: 20px; height: 20px; }
.search { width: 430px; height: 50px; border: 1px solid #686868; background: #3f3f3f; display: flex; align-items: center; padding-left: 14px; gap: 15px; color: #d8d8d8; font-size: 17px; letter-spacing: .4px; }
.app { width: 30px; height: 30px; }
.cell { height: 50px; width: 52px; display: flex; align-items: center; justify-content: center; }
.open { border-bottom: 3px solid #76b9ed; padding-top: 3px; }
.cur { width: 61px; background: #333; }
.t { width: 20px; height: 20px; fill: none; stroke: #fff; stroke-width: 1.3; }
.eng { font-size: 14px; letter-spacing: -.2px; }
.clock { width: 76px; margin-left: 4px; display: flex; flex-direction: column; align-items: center; font-size: 14px; line-height: 23px; letter-spacing: .1px; }
.edge { width: 1px; height: 50px; background: #777; }
```
